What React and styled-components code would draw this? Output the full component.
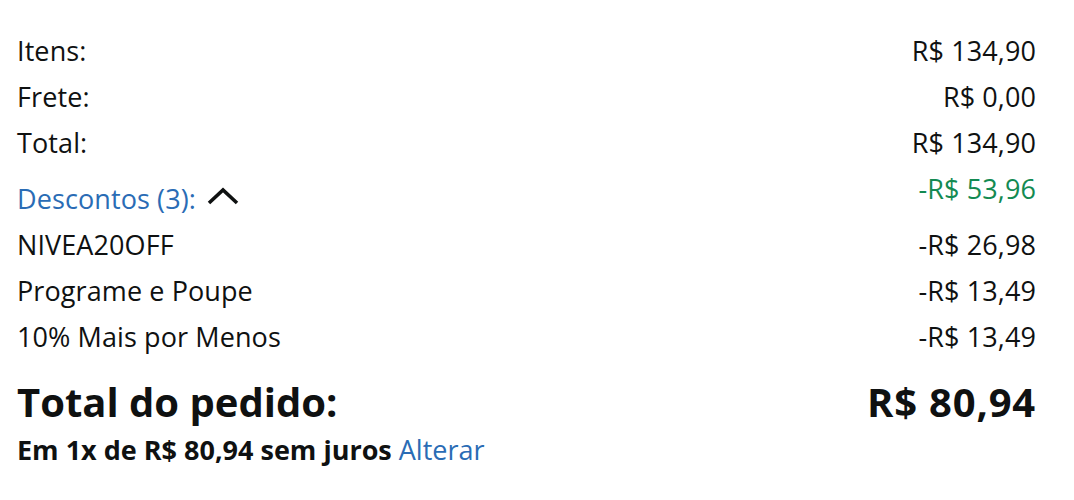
import React from "react";
import styled, { createGlobalStyle } from "styled-components";

const GlobalStyle = createGlobalStyle`
  body {
    margin: 0;
    background: #fff;
    font-family: "Open Sans", "Noto Sans", Arial, sans-serif;
    color: #0f1111;
  }
`;

const Summary = styled.div`
  width: 1074px;
  box-sizing: border-box;
  padding: 28px 38px 0 17px;
  display: flex;
  flex-direction: column;
`;

const Row = styled.div`
  display: flex;
  justify-content: space-between;
  align-items: flex-start;
  height: ${({ $h }) => $h || 46}px;
  font-size: 27px;
  line-height: 46px;
  letter-spacing: 0.1px;
  color: #0f1111;
`;

const Label = styled.span`
  display: flex;
  align-items: center;
  gap: 10px;
  padding-top: ${({ $offset }) => $offset || 0}px;
  color: ${({ $link }) => ($link ? "#2a6cb5" : "#0f1111")};
`;

const Value = styled.span`
  color: ${({ $green }) => ($green ? "#138a52" : "#0f1111")};
`;

const Chevron = styled.svg`
  width: 34px;
  height: 20px;
  margin-top: -6px;
`;

const TotalRow = styled.div`
  display: flex;
  justify-content: space-between;
  align-items: center;
  margin-top: 13px;
  height: 56px;
  font-size: 40px;
  font-weight: 700;
`;

const GrandValue = styled.span`
  letter-spacing: 0.8px;
`;

const Installments = styled.div`
  margin-top: 1px;
  font-size: 27px;
  font-weight: 700;
  line-height: 40px;
`;

const Link = styled.a`
  font-weight: 400;
  color: #2a6cb5;
  text-decoration: none;
`;

const base = [
  ["Itens:", "R$ 134,90"],
  ["Frete:", "R$ 0,00"],
  ["Total:", "R$ 134,90"],
];

const discounts = [
  ["NIVEA20OFF", "-R$ 26,98"],
  ["Programe e Poupe", "-R$ 13,49"],
  ["10% Mais por Menos", "-R$ 13,49"],
];

export default function App() {
  return (
    <>
      <GlobalStyle />
      <Summary>
        {base.map(([l, v]) => (
          <Row key={l}>
            <Label>{l}</Label>
            <Value>{v}</Value>
          </Row>
        ))}
        <Row $h={56}>
          <Label $link $offset={10}>
            Descontos (3):
            <Chevron viewBox="0 0 34 20">
              <path d="M3 17 L17 4 L31 17" fill="none" stroke="#0f1111" strokeWidth="3.6" />
            </Chevron>
          </Label>
          <Value $green>-R$ 53,96</Value>
        </Row>
        {discounts.map(([l, v]) => (
          <Row key={l}>
            <Label>{l}</Label>
            <Value>{v}</Value>
          </Row>
        ))}
        <TotalRow>
          <span>Total do pedido:</span>
          <GrandValue>R$ 80,94</GrandValue>
        </TotalRow>
        <Installments>
          Em 1x de R$ 80,94 sem juros <Link href="#">Alterar</Link>
        </Installments>
      </Summary>
    </>
  );
}
